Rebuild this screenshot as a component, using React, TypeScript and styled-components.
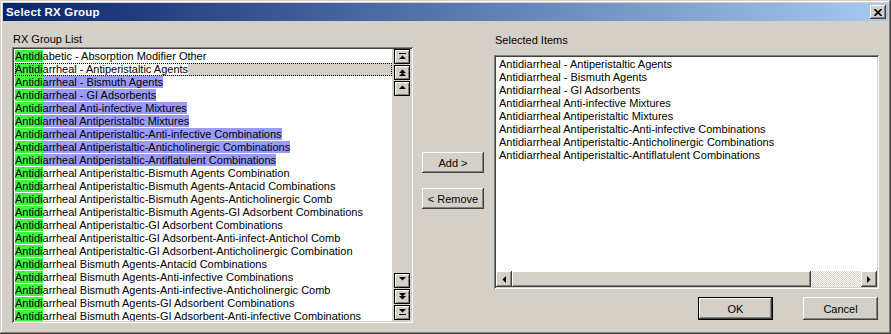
import React from "react";
import styled, { createGlobalStyle, css } from "styled-components";

const GlobalStyle = createGlobalStyle`
  html, body {
    margin: 0;
    padding: 0;
    background: #d4d0c8;
  }
  * {
    box-sizing: border-box;
  }
`;

const raised = css`
  background: #d4d0c8;
  box-shadow: inset -1px -1px #404040, inset 1px 1px #ffffff,
    inset -2px -2px #808080, inset 2px 2px #d4d0c8;
`;

const sunken = css`
  background: #ffffff;
  box-shadow: inset 1px 1px #808080, inset -1px -1px #ffffff,
    inset 2px 2px #404040, inset -2px -2px #d4d0c8;
  padding: 2px;
`;

const Window = styled.div`
  width: 891px;
  height: 334px;
  padding: 3px;
  background: #d4d0c8;
  font-family: "Liberation Sans", Arial, sans-serif;
  font-size: 11px;
  color: #000;
  box-shadow: inset -1px -1px #404040, inset 1px 1px #d4d0c8,
    inset -2px -2px #808080, inset 2px 2px #ffffff;
  display: flex;
  flex-direction: column;
`;

const TitleBar = styled.div`
  height: 18px;
  display: flex;
  align-items: center;
  justify-content: space-between;
  padding: 0 2px 0 3px;
  background: linear-gradient(to right, #0a246a, #a6caf0);
`;

const Title = styled.span`
  color: #fff;
  font-weight: bold;
  font-size: 11.5px;
  letter-spacing: 0.2px;
`;

const CloseButton = styled.div`
  ${raised};
  width: 16px;
  height: 14px;
  display: flex;
  align-items: center;
  justify-content: center;
`;

const Body = styled.div`
  flex: 1;
  display: flex;
  padding: 0 9px;
`;

const LeftColumn = styled.div`
  width: 401px;
  display: flex;
  flex-direction: column;
`;

const Label = styled.div<{ $top: number }>`
  margin-top: ${(p) => p.$top}px;
  height: 13px;
  line-height: 13px;
  padding-left: 1px;
`;

const GroupList = styled.div`
  ${sunken};
  margin-top: 1px;
  height: 276px;
  display: flex;
`;

const Rows = styled.div`
  flex: 1;
  overflow: hidden;
  padding: 1px 0 0 1px;
`;

const Row = styled.div<{ $focused?: boolean }>`
  height: 13px;
  line-height: 13px;
  white-space: nowrap;
  ${(p) =>
    p.$focused &&
    css`
      background: #d4d0c8;
      outline: 1px dotted #000;
      outline-offset: -1px;
    `}
`;

const Match = styled.span`
  background: #3ef23e;
`;

const Rest = styled.span<{ $selected?: boolean }>`
  background: ${(p) => (p.$selected ? "#9a9aff" : "#fff")};
`;

const VScroll = styled.div`
  width: 19px;
  background: #d4d0c8;
  display: flex;
  flex-direction: column;
  justify-content: space-between;
  padding: 0 0 1px 2px;
`;

const ArrowStack = styled.div`
  display: flex;
  flex-direction: column;
  gap: 1px;
`;

const ArrowButton = styled.div`
  width: 16px;
  height: 15px;
  background: #d4d0c8;
  border: 1px solid #000;
  box-shadow: inset 1px 1px #fff, inset -1px -1px #808080;
  display: flex;
  align-items: center;
  justify-content: center;
`;

const MiddleColumn = styled.div`
  width: 81px;
  padding: 131px 0 0 9px;
  display: flex;
  flex-direction: column;
  gap: 15px;
`;

const Button = styled.div<{ $default?: boolean }>`
  ${raised};
  height: 21px;
  display: flex;
  align-items: center;
  justify-content: center;
  ${(p) =>
    p.$default &&
    css`
      border: 1px solid #000;
    `}
`;

const MoveButton = styled(Button)`
  width: 62px;
`;

const RightColumn = styled.div`
  width: 385px;
  display: flex;
  flex-direction: column;
`;

const SelectedList = styled.div`
  ${sunken};
  margin-top: 8px;
  height: 234px;
  display: flex;
  flex-direction: column;
`;

const SelectedRows = styled.div`
  flex: 1;
  padding: 1px 3px;
  overflow: hidden;
`;

const HScroll = styled.div`
  height: 16px;
  display: flex;
`;

const HArrow = styled.div`
  ${raised};
  width: 16px;
  display: flex;
  align-items: center;
  justify-content: center;
`;

const HThumb = styled.div`
  ${raised};
  width: 299px;
`;

const HTrack = styled.div`
  flex: 1;
  background-color: #fff;
  background-image: repeating-conic-gradient(#d4d0c8 0 25%, #fff 0 50%);
  background-size: 2px 2px;
`;

const Footer = styled.div`
  margin-top: 8px;
  display: flex;
  justify-content: flex-end;
  gap: 30px;
  padding-right: 1px;
`;

const DialogButton = styled(Button)`
  width: 75px;
  height: 23px;
`;

const Arrow = ({ kind }: { kind: string }) => {
  let d = "";
  if (kind === "first") d = "M0 0 H7 V1 H0 Z M0 6 L3.5 2.5 L7 6 Z";
  if (kind === "pageUp") d = "M0 4 L3.5 0.5 L7 4 Z M0 7 L3.5 3.5 L7 7 Z";
  if (kind === "up") d = "M0 4 L3.5 0.5 L7 4 Z";
  if (kind === "down") d = "M0 0 L3.5 3.5 L7 0 Z";
  if (kind === "pageDown") d = "M0 0 L3.5 3.5 L7 0 Z M0 3 L3.5 6.5 L7 3 Z";
  if (kind === "last") d = "M0 0 L3.5 3.5 L7 0 Z M0 5 H7 V6 H0 Z";
  return (
    <svg width="7" height="7" viewBox="0 0 7 7">
      <path d={d} fill="#000" />
    </svg>
  );
};

const items = [
  ["abetic - Absorption Modifier Other", false],
  ["arrheal - Antiperistaltic Agents", false],
  ["arrheal - Bismuth Agents", true],
  ["arrheal - GI Adsorbents", true],
  ["arrheal Anti-infective Mixtures", true],
  ["arrheal Antiperistaltic Mixtures", true],
  ["arrheal Antiperistaltic-Anti-infective Combinations", true],
  ["arrheal Antiperistaltic-Anticholinergic Combinations", true],
  ["arrheal Antiperistaltic-Antiflatulent Combinations", true],
  ["arrheal Antiperistaltic-Bismuth Agents Combination", false],
  ["arrheal Antiperistaltic-Bismuth Agents-Antacid Combinations", false],
  ["arrheal Antiperistaltic-Bismuth Agents-Anticholinergic Comb", false],
  ["arrheal Antiperistaltic-Bismuth Agents-GI Adsorbent Combinations", false],
  ["arrheal Antiperistaltic-GI Adsorbent Combinations", false],
  ["arrheal Antiperistaltic-GI Adsorbent-Anti-infect-Antichol Comb", false],
  ["arrheal Antiperistaltic-GI Adsorbent-Anticholinergic Combination", false],
  ["arrheal Bismuth Agents-Antacid Combinations", false],
  ["arrheal Bismuth Agents-Anti-infective Combinations", false],
  ["arrheal Bismuth Agents-Anti-infective-Anticholinergic Comb", false],
  ["arrheal Bismuth Agents-GI Adsorbent Combinations", false],
  ["arrheal Bismuth Agents-GI Adsorbent-Anti-infective Combinations", false],
] as const;

const selected = [
  "Antidiarrheal - Antiperistaltic Agents",
  "Antidiarrheal - Bismuth Agents",
  "Antidiarrheal - GI Adsorbents",
  "Antidiarrheal Anti-infective Mixtures",
  "Antidiarrheal Antiperistaltic Mixtures",
  "Antidiarrheal Antiperistaltic-Anti-infective Combinations",
  "Antidiarrheal Antiperistaltic-Anticholinergic Combinations",
  "Antidiarrheal Antiperistaltic-Antiflatulent Combinations",
];

export default function App() {
  return (
    <>
      <GlobalStyle />
      <Window>
        <TitleBar>
          <Title>Select RX Group</Title>
          <CloseButton>
            <svg width="8" height="7" viewBox="0 0 8 7">
              <path d="M0.5 0 L7.5 7 M7.5 0 L0.5 7" stroke="#000" strokeWidth="1.6" />
            </svg>
          </CloseButton>
        </TitleBar>
        <Body>
          <LeftColumn>
            <Label $top={12}>RX Group List</Label>
            <GroupList>
              <Rows>
                {items.map(([rest, sel], i) => (
                  <Row key={i} $focused={i === 1}>
                    <Match>Antidi</Match>
                    <Rest $selected={sel}>{rest}</Rest>
                  </Row>
                ))}
              </Rows>
              <VScroll>
                <ArrowStack>
                  <ArrowButton><Arrow kind="first" /></ArrowButton>
                  <ArrowButton><Arrow kind="pageUp" /></ArrowButton>
                  <ArrowButton><Arrow kind="up" /></ArrowButton>
                </ArrowStack>
                <ArrowStack>
                  <ArrowButton><Arrow kind="down" /></ArrowButton>
                  <ArrowButton><Arrow kind="pageDown" /></ArrowButton>
                  <ArrowButton><Arrow kind="last" /></ArrowButton>
                </ArrowStack>
              </VScroll>
            </GroupList>
          </LeftColumn>
          <MiddleColumn>
            <MoveButton>Add &gt;</MoveButton>
            <MoveButton>&lt; Remove</MoveButton>
          </MiddleColumn>
          <RightColumn>
            <Label $top={13}>Selected Items</Label>
            <SelectedList>
              <SelectedRows>
                {selected.map((s) => (
                  <Row key={s}>{s}</Row>
                ))}
              </SelectedRows>
              <HScroll>
                <HArrow>
                  <svg width="4" height="7" viewBox="0 0 4 7">
                    <path d="M4 0 L0.5 3.5 L4 7 Z" fill="#000" />
                  </svg>
                </HArrow>
                <HThumb />
                <HTrack />
                <HArrow>
                  <svg width="4" height="7" viewBox="0 0 4 7">
                    <path d="M0 0 L3.5 3.5 L0 7 Z" fill="#000" />
                  </svg>
                </HArrow>
              </HScroll>
            </SelectedList>
            <Footer>
              <DialogButton $default>OK</DialogButton>
              <DialogButton>Cancel</DialogButton>
            </Footer>
          </RightColumn>
        </Body>
      </Window>
    </>
  );
}
